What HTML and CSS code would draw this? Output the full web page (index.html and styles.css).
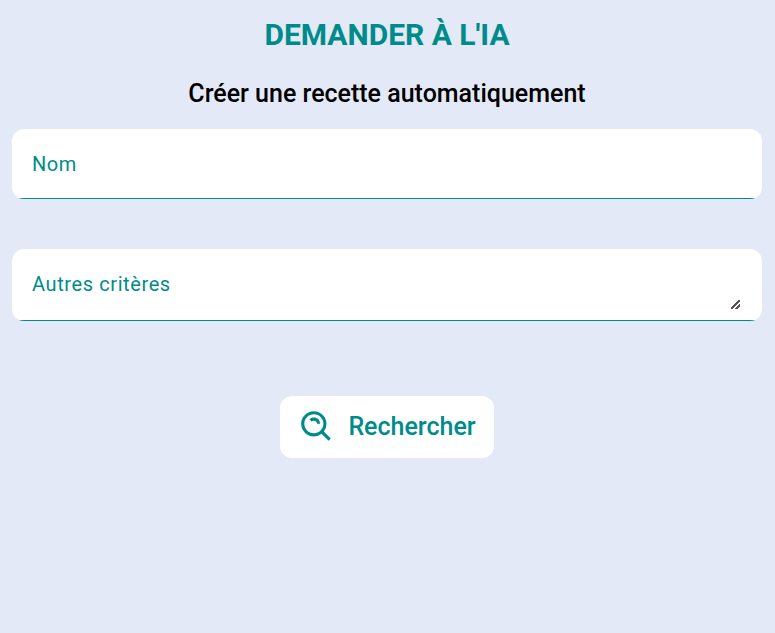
FILE: index.html
```html
<!DOCTYPE html>
<html lang="fr">
<head>
  <meta charset="utf-8">
  <meta name="viewport" content="width=device-width, initial-scale=1">
  <title>Demander à l'IA</title>
  <link rel="stylesheet" href="styles.css">
</head>
<body>
  <main class="page">
    <h1 class="title">DEMANDER À L'IA</h1>
    <h2 class="subtitle">Créer une recette automatiquement</h2>
    <form class="form">
      <div class="field">
        <label class="field-label" for="name">Nom</label>
        <input class="field-control" id="name" type="text">
      </div>
      <div class="field field-multiline">
        <label class="field-label" for="criteria">Autres critères</label>
        <textarea class="field-control" id="criteria" rows="1"></textarea>
      </div>
      <button class="search-button" type="submit">
        <svg class="search-icon" viewBox="0 0 24 24" aria-hidden="true">
          <path d="M10 18a7.952 7.952 0 0 0 4.897-1.688l4.396 4.396 1.414-1.414-4.396-4.396A7.952 7.952 0 0 0 18 10c0-4.411-3.589-8-8-8s-8 3.589-8 8 3.589 8 8 8zm0-14c3.309 0 6 2.691 6 6s-2.691 6-6 6-6-2.691-6-6 2.691-6 6-6z"/>
          <path d="M11.412 8.586c.379.38.588.882.588 1.414h2a3.977 3.977 0 0 0-1.174-2.828c-1.514-1.512-4.139-1.512-5.652 0l1.412 1.416c.76-.758 2.07-.756 2.826-.002z"/>
        </svg>
        <span>Rechercher</span>
      </button>
    </form>
  </main>
</body>
</html>
```
FILE: styles.css
```css
* {
  box-sizing: border-box;
}

body {
  margin: 0;
  background: #e3e9f7;
  color: #000;
  font-family: Roboto, sans-serif;
}

.page {
  padding: 16px 13px 16px 12px;
}

.title,
.subtitle {
  margin: 0;
  text-align: center;
}

.title {
  color: #008b8b;
  font-size: 30px;
  font-weight: 700;
  line-height: 38px;
}

.subtitle {
  margin-top: 24px;
  font-size: 25px;
  font-weight: 500;
  line-height: 32px;
}

.form {
  display: flex;
  flex-direction: column;
  align-items: center;
  margin-top: 19px;
}

/* The underline is a background layer, so the rounded corners clip it. */
.field {
  display: grid;
  width: 100%;
  min-height: 70px;
  padding: 0 20px;
  overflow: hidden;
  border-radius: 12px;
  background: linear-gradient(#008b8b, #008b8b) bottom / 100% 1px no-repeat #fff;
}

.field-multiline {
  min-height: 72px;
  margin-top: 50px;
}

.field-label,
.field-control {
  grid-area: 1 / 1;
}

.field-label {
  align-self: start;
  padding-top: 23px;
  color: #008b8b;
  font-size: 20px;
  line-height: 24px;
  letter-spacing: 0.03em;
  pointer-events: none;
}

.field-control {
  width: 100%;
  height: 24px;
  margin: 23px 0 0;
  padding: 0;
  border: 0;
  outline: 0;
  background: transparent;
  color: inherit;
  font: 20px/24px Roboto, sans-serif;
}

.field-multiline .field-control {
  height: 39px;
  resize: vertical;
}

/* Two diagonal grip strokes in the corner of the text area. */
.field-control::-webkit-resizer {
  background:
    linear-gradient(135deg, transparent 44%, #555 44%, #555 56%, transparent 56%, transparent 72%, #555 72%, #555 84%, transparent 84%)
    right 2px bottom 2px / 9px 9px no-repeat;
}

.search-button {
  display: flex;
  align-items: center;
  gap: 12px;
  height: 62px;
  margin-top: 75px;
  padding: 0 18px;
  border: 0;
  border-radius: 12px;
  background: #fff;
  color: #008b8b;
  font: 500 25px/32px Roboto, sans-serif;
  cursor: pointer;
}

.search-icon {
  width: 38px;
  height: 38px;
  fill: currentColor;
}
```
